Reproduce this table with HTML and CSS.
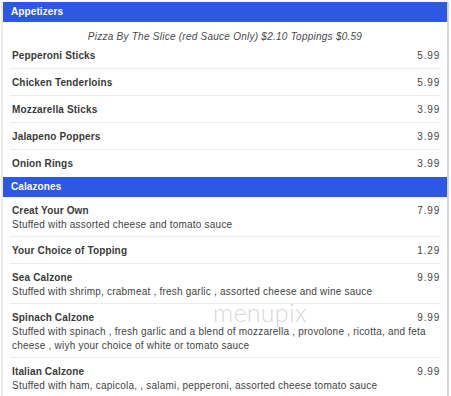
FILE: index.html
```html
<!DOCTYPE html>
<html>
<head>
<meta charset="utf-8">
<link rel="stylesheet" href="styles.css">
</head>
<body>
<div class="menu">
  <section class="cat">
    <h2 class="cat-head">Appetizers</h2>
    <p class="cat-note">Pizza By The Slice (red Sauce Only) $2.10 Toppings $0.59</p>
    <ul class="items">
      <li class="item"><div class="line"><span class="name">Pepperoni Sticks</span><span class="price">5.99</span></div></li>
      <li class="item"><div class="line"><span class="name">Chicken Tenderloins</span><span class="price">5.99</span></div></li>
      <li class="item"><div class="line"><span class="name">Mozzarella Sticks</span><span class="price">3.99</span></div></li>
      <li class="item"><div class="line"><span class="name">Jalapeno Poppers</span><span class="price">3.99</span></div></li>
      <li class="item"><div class="line"><span class="name">Onion Rings</span><span class="price">3.99</span></div></li>
    </ul>
  </section>
  <section class="cat">
    <h2 class="cat-head">Calazones</h2>
    <ul class="items">
      <li class="item"><div class="line"><span class="name">Creat Your Own</span><span class="price">7.99</span></div><p class="desc">Stuffed with assorted cheese and tomato sauce</p></li>
      <li class="item"><div class="line"><span class="name">Your Choice of Topping</span><span class="price">1.29</span></div></li>
      <li class="item"><div class="line"><span class="name">Sea Calzone</span><span class="price">9.99</span></div><p class="desc">Stuffed with shrimp, crabmeat , fresh garlic , assorted cheese and wine sauce</p></li>
      <li class="item"><div class="line"><span class="name">Spinach Calzone</span><span class="price">9.99</span></div><p class="desc">Stuffed with spinach , fresh garlic and a blend of mozzarella , provolone , ricotta, and feta cheese , wiyh your choice of white or tomato sauce</p></li>
      <li class="item"><div class="line"><span class="name">Italian Calzone</span><span class="price">9.99</span></div><p class="desc">Stuffed with ham, capicola, , salami, pepperoni, assorted cheese tomato sauce</p></li>
    </ul>
  </section>
  <div class="watermark">menupix</div>
</div>
</body>
</html>
```
FILE: styles.css
```css
html, body {
  margin: 0;
  padding: 0;
  background: #fff;
}
body {
  padding-top: 2px;
  font-family: "Liberation Sans", Arial, sans-serif;
  font-size: 10px;
  color: #333;
}
.menu {
  position: relative;
  margin-left: 1px;
  width: 444px;
  min-height: 394px;
  border-left: 2px solid #ececec;
  border-right: 2px solid #d4d4d4;
}
.cat-head {
  margin: 0;
  height: 20px;
  line-height: 20px;
  padding: 0 8px;
  background: #2c58e2;
  color: #fff;
  font-size: 10px;
  font-weight: bold;
  letter-spacing: 0.1px;
}
.cat-note {
  margin: 0;
  padding-top: 9px;
  height: 11px;
  line-height: 11px;
  text-align: center;
  font-style: italic;
  color: #4a4a4a;
  letter-spacing: 0.25px;
}
.items {
  list-style: none;
  margin: 0 7px 0 7px;
  padding: 0;
}
.item {
  padding: 7px 0 5px 2px;
  border-bottom: 1px solid #ececec;
}
.item:has(.desc) {
  padding-bottom: 4px;
}
.item:last-child {
  border-bottom-color: transparent;
}
.line {
  display: flex;
  justify-content: space-between;
  line-height: 14px;
}
.name {
  font-weight: bold;
  color: #3a3a3a;
  letter-spacing: 0.15px;
}
.price {
  color: #444;
  letter-spacing: 0.8px;
}
.desc {
  margin: 0;
  line-height: 14px;
  color: #444;
  letter-spacing: 0.22px;
}
.watermark {
  position: absolute;
  left: 210px;
  top: 295px;
  font-family: "Lato", "DejaVu Sans", sans-serif;
  font-weight: 300;
  font-size: 25px;
  letter-spacing: 0.3px;
  color: rgba(150, 150, 150, 0.4);
  pointer-events: none;
}
```
